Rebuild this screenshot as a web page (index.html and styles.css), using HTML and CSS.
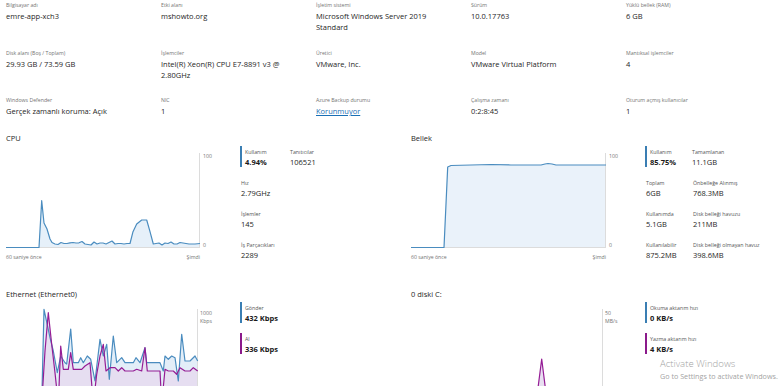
FILE: index.html
```html
<!DOCTYPE html>
<html lang="tr">
<head>
<meta charset="utf-8">
<title>Genel Bakış</title>
<link rel="stylesheet" href="styles.css">
</head>
<body>
<div class="page">
  <section class="info">
    <div class="field"><div class="lbl">Bilgisayar adı</div><div class="val">emre-app-xch3</div></div>
    <div class="field"><div class="lbl">Etki alanı</div><div class="val">mshowto.org</div></div>
    <div class="field"><div class="lbl">İşletim sistemi</div><div class="val">Microsoft Windows Server 2019 Standard</div></div>
    <div class="field"><div class="lbl">Sürüm</div><div class="val">10.0.17763</div></div>
    <div class="field"><div class="lbl">Yüklü bellek (RAM)</div><div class="val">6 GB</div></div>

    <div class="field"><div class="lbl">Disk alanı (Boş / Toplam)</div><div class="val">29.93 GB / 73.59 GB</div></div>
    <div class="field"><div class="lbl">İşlemciler</div><div class="val">Intel(R) Xeon(R) CPU E7-8891 v3 @ 2.80GHz</div></div>
    <div class="field"><div class="lbl">Üretici</div><div class="val">VMware, Inc.</div></div>
    <div class="field"><div class="lbl">Model</div><div class="val">VMware Virtual Platform</div></div>
    <div class="field"><div class="lbl">Mantıksal işlemciler</div><div class="val">4</div></div>

    <div class="field"><div class="lbl">Windows Defender</div><div class="val">Gerçek zamanlı koruma: Açık</div></div>
    <div class="field"><div class="lbl">NIC</div><div class="val">1</div></div>
    <div class="field"><div class="lbl">Azure Backup durumu</div><div class="val"><a class="link" href="#">Korunmuyor</a></div></div>
    <div class="field"><div class="lbl">Çalışma zamanı</div><div class="val">0:2:8:45</div></div>
    <div class="field"><div class="lbl">Oturum açmış kullanıcılar</div><div class="val">1</div></div>
  </section>

  <section class="perf">
    <!-- CPU -->
    <div class="panel">
      <h2 class="ptitle">CPU</h2>
      <div class="pbody">
        <div class="chartwrap">
          <div class="chartcol">
            <svg class="chart" width="194" height="95" viewBox="0 0 194 95">
              <polygon class="fill-blue" points="0,95 33,95 35.7,47.7 38,70 41,76 44,86 46,89.5 49,91 52,91.5 55,89.5 58,90.5 61,90.5 64,89.8 67,89.5 70,90 73,89.8 76,88.5 79,91 82,91.5 85,92 88,89 91,91 94,90 97,90 100,91 103,89.5 106,88 109,91 112,90.5 115,90.5 118,91 121,90.5 124,90.5 127,78.7 130.7,71 135.7,67 140.7,67 144,78.7 147.3,91 150,90.5 153,90 156,92 159,90 162,90.5 165,89 168,91 171,91 174,89.5 177,90 180,90.5 183,91 186,91 189,91 194,90.5 194,95"/>
              <line class="grid" x1="0" y1="94.5" x2="194" y2="94.5"/>
              <line class="grid" x1="193.5" y1="0" x2="193.5" y2="95"/>
              <polyline class="line-blue" points="0,94.5 33,94.5 35.7,47.7 38,70 41,76 44,86 46,89.5 49,91 52,91.5 55,89.5 58,90.5 61,90.5 64,89.8 67,89.5 70,90 73,89.8 76,88.5 79,91 82,91.5 85,92 88,89 91,91 94,90 97,90 100,91 103,89.5 106,88 109,91 112,90.5 115,90.5 118,91 121,90.5 124,90.5 127,78.7 130.7,71 135.7,67 140.7,67 144,78.7 147.3,91 150,90.5 153,90 156,92 159,90 162,90.5 165,89 168,91 171,91 174,89.5 177,90 180,90.5 183,91 186,91 189,91 194,90.5"/>
            </svg>
            <div class="timeaxis"><span>60 saniye önce</span><span>Şimdi</span></div>
          </div>
          <div class="yaxis"><span>100</span><span>0</span></div>
        </div>
        <div class="stats stats-cpu">
          <div class="stat hl-blue"><div class="slbl">Kullanım</div><div class="sval bold">4.94%</div></div>
          <div class="stat"><div class="slbl">Tanıtıcılar</div><div class="sval">106521</div></div>
          <div class="stat"><div class="slbl">Hız</div><div class="sval">2.79GHz</div></div>
          <div class="stat"></div>
          <div class="stat"><div class="slbl">İşlemler</div><div class="sval">145</div></div>
          <div class="stat"></div>
          <div class="stat"><div class="slbl">İş Parçacıkları</div><div class="sval">2289</div></div>
          <div class="stat"></div>
        </div>
      </div>
    </div>

    <!-- Bellek -->
    <div class="panel">
      <h2 class="ptitle">Bellek</h2>
      <div class="pbody">
        <div class="chartwrap">
          <div class="chartcol">
            <svg class="chart" width="195" height="95" viewBox="0 0 195 95">
              <polygon class="fill-blue2" points="0,95 33,95 36.7,14 40,12.5 60,12 80,11.5 100,12 120,12 130,12 134,11 137,10.5 141,11 145,12 160,12 195,12 195,95"/>
              <line class="grid" x1="0" y1="94.5" x2="195" y2="94.5"/>
              <line class="grid" x1="194.5" y1="0" x2="194.5" y2="95"/>
              <polyline class="line-blue" points="0,94.5 33,94.5 36.7,14 40,12.5 60,12 80,11.5 100,12 120,12 130,12 134,11 137,10.5 141,11 145,12 160,12 195,12"/>
            </svg>
            <div class="timeaxis"><span>60 saniye önce</span><span>Şimdi</span></div>
          </div>
          <div class="yaxis"><span>100</span><span>0</span></div>
        </div>
        <div class="stats stats-mem">
          <div class="stat hl-blue"><div class="slbl">Kullanım</div><div class="sval bold">85.75%</div></div>
          <div class="stat"><div class="slbl">Tamamlanan</div><div class="sval">11.1GB</div></div>
          <div class="stat"><div class="slbl">Toplam</div><div class="sval">6GB</div></div>
          <div class="stat"><div class="slbl">Önbelleğe Alınmış</div><div class="sval">768.3MB</div></div>
          <div class="stat"><div class="slbl">Kullanımda</div><div class="sval">5.1GB</div></div>
          <div class="stat"><div class="slbl">Disk belleği havuzu</div><div class="sval">211MB</div></div>
          <div class="stat"><div class="slbl">Kullanılabilir</div><div class="sval">875.2MB</div></div>
          <div class="stat"><div class="slbl">Disk belleği olmayan havuz</div><div class="sval">398.6MB</div></div>
        </div>
      </div>
    </div>

    <!-- Ethernet -->
    <div class="panel">
      <h2 class="ptitle">Ethernet (Ethernet0)</h2>
      <div class="pbody">
        <div class="chartwrap">
          <div class="chartcol">
            <svg class="chart" width="192" height="95" viewBox="0 0 192 95">
              <polygon class="fill-blue3" points="35.7,95 38,0.3 44,28.7 47.3,42 51.3,63.7 54.7,47 59,53.7 60.7,55 64.7,20 67.3,53.7 72.3,53.7 74.7,48.7 77.3,53.7 81.3,47 84.7,50.3 89,72 94,30.3 97.3,47 100.7,35.3 103.3,70.3 107.3,27 110.7,53.7 115.7,48.7 119,53.7 127.3,53.7 130,48.7 134,53.7 139,38.7 140.7,53.7 154,53.7 157.3,62 159,47 162.3,50.3 165.7,47 169,48.7 172.3,72 175.7,25.3 179,52 184,52 189,47 191.7,52 191.7,95"/>
              <polygon class="fill-purple" points="35.7,95 39,42 42.3,3.7 45.7,35.3 49,63.7 52.3,95 54.7,37 57.3,60.3 62.3,60.3 64.7,43.7 67.3,60.3 75.7,60.3 79,57 84,53.7 87.3,95 90.7,65.3 94,47 97.3,35.3 100,62 104,58.7 109,58.7 112.3,62 115.7,58.7 119,62 127.3,62 130.7,60.3 135.7,62 139,38.7 141.3,62 154,62 155.7,95 159,60.3 162.3,62 167.3,62 170.7,65.3 174,58.7 179,62 184,62 187.3,58.7 191.7,62 191.7,95"/>
              <line class="grid" x1="191.5" y1="0" x2="191.5" y2="95"/>
              <polyline class="line-blue" points="35.7,95 38,0.3 44,28.7 47.3,42 51.3,63.7 54.7,47 59,53.7 60.7,55 64.7,20 67.3,53.7 72.3,53.7 74.7,48.7 77.3,53.7 81.3,47 84.7,50.3 89,72 94,30.3 97.3,47 100.7,35.3 103.3,70.3 107.3,27 110.7,53.7 115.7,48.7 119,53.7 127.3,53.7 130,48.7 134,53.7 139,38.7 140.7,53.7 154,53.7 157.3,62 159,47 162.3,50.3 165.7,47 169,48.7 172.3,72 175.7,25.3 179,52 184,52 189,47 191.7,52"/>
              <polyline class="line-purple" points="35.7,95 39,42 42.3,3.7 45.7,35.3 49,63.7 52.3,95 54.7,37 57.3,60.3 62.3,60.3 64.7,43.7 67.3,60.3 75.7,60.3 79,57 84,53.7 87.3,95 90.7,65.3 94,47 97.3,35.3 100,62 104,58.7 109,58.7 112.3,62 115.7,58.7 119,62 127.3,62 130.7,60.3 135.7,62 139,38.7 141.3,62 154,62 155.7,95 159,60.3 162.3,62 167.3,62 170.7,65.3 174,58.7 179,62 184,62 187.3,58.7 191.7,62"/>
            </svg>
          </div>
          <div class="yaxis yaxis-unit"><span>1000<br>Kbps</span></div>
        </div>
        <div class="stats stats-net">
          <div class="stat hl-blue"><div class="slbl">Gönder</div><div class="sval bold">432 Kbps</div></div>
          <div class="stat hl-purple"><div class="slbl">Al</div><div class="sval bold">336 Kbps</div></div>
        </div>
      </div>
    </div>

    <!-- Disk -->
    <div class="panel">
      <h2 class="ptitle">0 diski C:</h2>
      <div class="pbody">
        <div class="chartwrap">
          <div class="chartcol">
            <svg class="chart" width="192" height="95" viewBox="0 0 192 95">
              <polygon class="fill-purple" points="125,95 130.7,50 136.3,95"/>
              <line class="grid" x1="191.5" y1="0" x2="191.5" y2="95"/>
              <polyline class="line-purple" points="0,94.5 125,94.5 130.7,50 136.3,94.5 192,94.5"/>
            </svg>
          </div>
          <div class="yaxis yaxis-unit"><span>50<br>MB/s</span></div>
        </div>
        <div class="stats stats-disk">
          <div class="stat hl-blue"><div class="slbl">Okuma aktarım hızı</div><div class="sval bold">0 KB/s</div></div>
          <div class="stat hl-purple"><div class="slbl">Yazma aktarım hızı</div><div class="sval bold">4 KB/s</div></div>
        </div>
      </div>
    </div>
  </section>
</div>

<div class="watermark">
  <div class="wm-title">Activate Windows</div>
  <div class="wm-sub">Go to Settings to activate Windows.</div>
</div>
</body>
</html>
```

FILE: styles.css
```css
html, body {
  margin: 0;
  padding: 0;
  overflow: hidden;
  background: #ffffff;
}

body {
  font-family: "Open Sans", "Noto Sans", "Liberation Sans", sans-serif;
  color: #262626;
  width: 784px;
  height: 386px;
  position: relative;
}

.page {
  padding: 1px 0 0 6px;
}

/* ---------- info grid ---------- */
.info {
  display: grid;
  grid-template-columns: repeat(5, 155px);
  grid-auto-rows: 33px;
  row-gap: 14.5px;
}

.lbl {
  font-size: 5.2px;
  line-height: 8px;
  color: #737373;
  white-space: nowrap;
}

.val {
  margin-top: 2px;
  font-size: 7.5px;
  line-height: 11px;
  color: #262626;
  max-width: 128px;
}

.link {
  color: #1a6fb5;
  text-decoration: underline;
}

/* ---------- performance panels ---------- */
.perf {
  margin-top: 4px;
  display: grid;
  grid-template-columns: 405px 373px;
  row-gap: 27.5px;
}

.ptitle {
  margin: 0;
  font-size: 7.5px;
  font-weight: 400;
  line-height: 11px;
  color: #262626;
}

.pbody {
  margin-top: 2px;
  display: flex;
  align-items: flex-start;
}

.chartwrap {
  width: 234px;
  flex: none;
  display: flex;
  align-items: flex-start;
  margin-top: 7px;
}

.chartcol {
  display: flex;
  flex-direction: column;
}

.chart {
  display: block;
  overflow: visible;
}

.grid {
  stroke: #dcdcdc;
  stroke-width: 1;
}

.fill-blue { fill: #e6f0f9; }
.fill-blue2 { fill: #eaf2fa; }
.fill-blue3 { fill: #e3eef8; }
.fill-purple { fill: #e6dcef; fill-opacity: 0.9; }

.line-blue {
  fill: none;
  stroke: #4a8cbf;
  stroke-width: 1.2;
  stroke-linejoin: round;
}

.line-purple {
  fill: none;
  stroke: #951c95;
  stroke-width: 1.2;
  stroke-linejoin: round;
}

.timeaxis {
  margin-top: 5px;
  display: flex;
  justify-content: space-between;
  font-size: 5.2px;
  line-height: 8px;
  color: #737373;
}

.yaxis {
  margin-top: -1px;
  height: 97px;
  padding-left: 3px;
  display: flex;
  flex-direction: column;
  justify-content: space-between;
  font-size: 5.2px;
  line-height: 8px;
  color: #737373;
}

.yaxis-unit {
  margin-top: 0;
  padding-left: 2px;
}

/* ---------- stats ---------- */
.stats {
  display: grid;
  row-gap: 10px;
}

.stats-cpu { grid-template-columns: 50px 60px; }
.stats-mem { grid-template-columns: 47px 90px; }
.stats-net,
.stats-disk { grid-template-columns: 90px; }

.stat {
  padding: 2px 0 0 3px;
  border-left: 2px solid transparent;
  height: 21px;
  box-sizing: border-box;
}

.stats-cpu .stat:not(.hl-blue),
.stats-mem .stat:not(.hl-blue) {
  border-left-width: 0;
  padding-left: 1px;
}

.stats-cpu .stat:nth-child(2),
.stats-mem .stat:nth-child(2) {
  padding-left: 0;
}

.hl-blue { border-left-color: #3a7eb3; }
.hl-purple { border-left-color: #8b1a8b; }

.slbl {
  font-size: 5.3px;
  line-height: 8px;
  color: #555555;
  white-space: nowrap;
}

.sval {
  margin-top: 1px;
  font-size: 7.5px;
  line-height: 10px;
  color: #262626;
  white-space: nowrap;
}

.sval.bold {
  font-weight: 700;
  color: #1a1a1a;
}

/* ---------- activation watermark (overlay) ---------- */
.watermark {
  position: absolute;
  left: 660px;
  top: 357px;
  color: #a3a3a3;
  white-space: nowrap;
}

.wm-title {
  font-size: 9.6px;
  font-weight: 300;
  line-height: 14px;
}

.wm-sub {
  font-size: 7.2px;
  line-height: 10px;
}
```
